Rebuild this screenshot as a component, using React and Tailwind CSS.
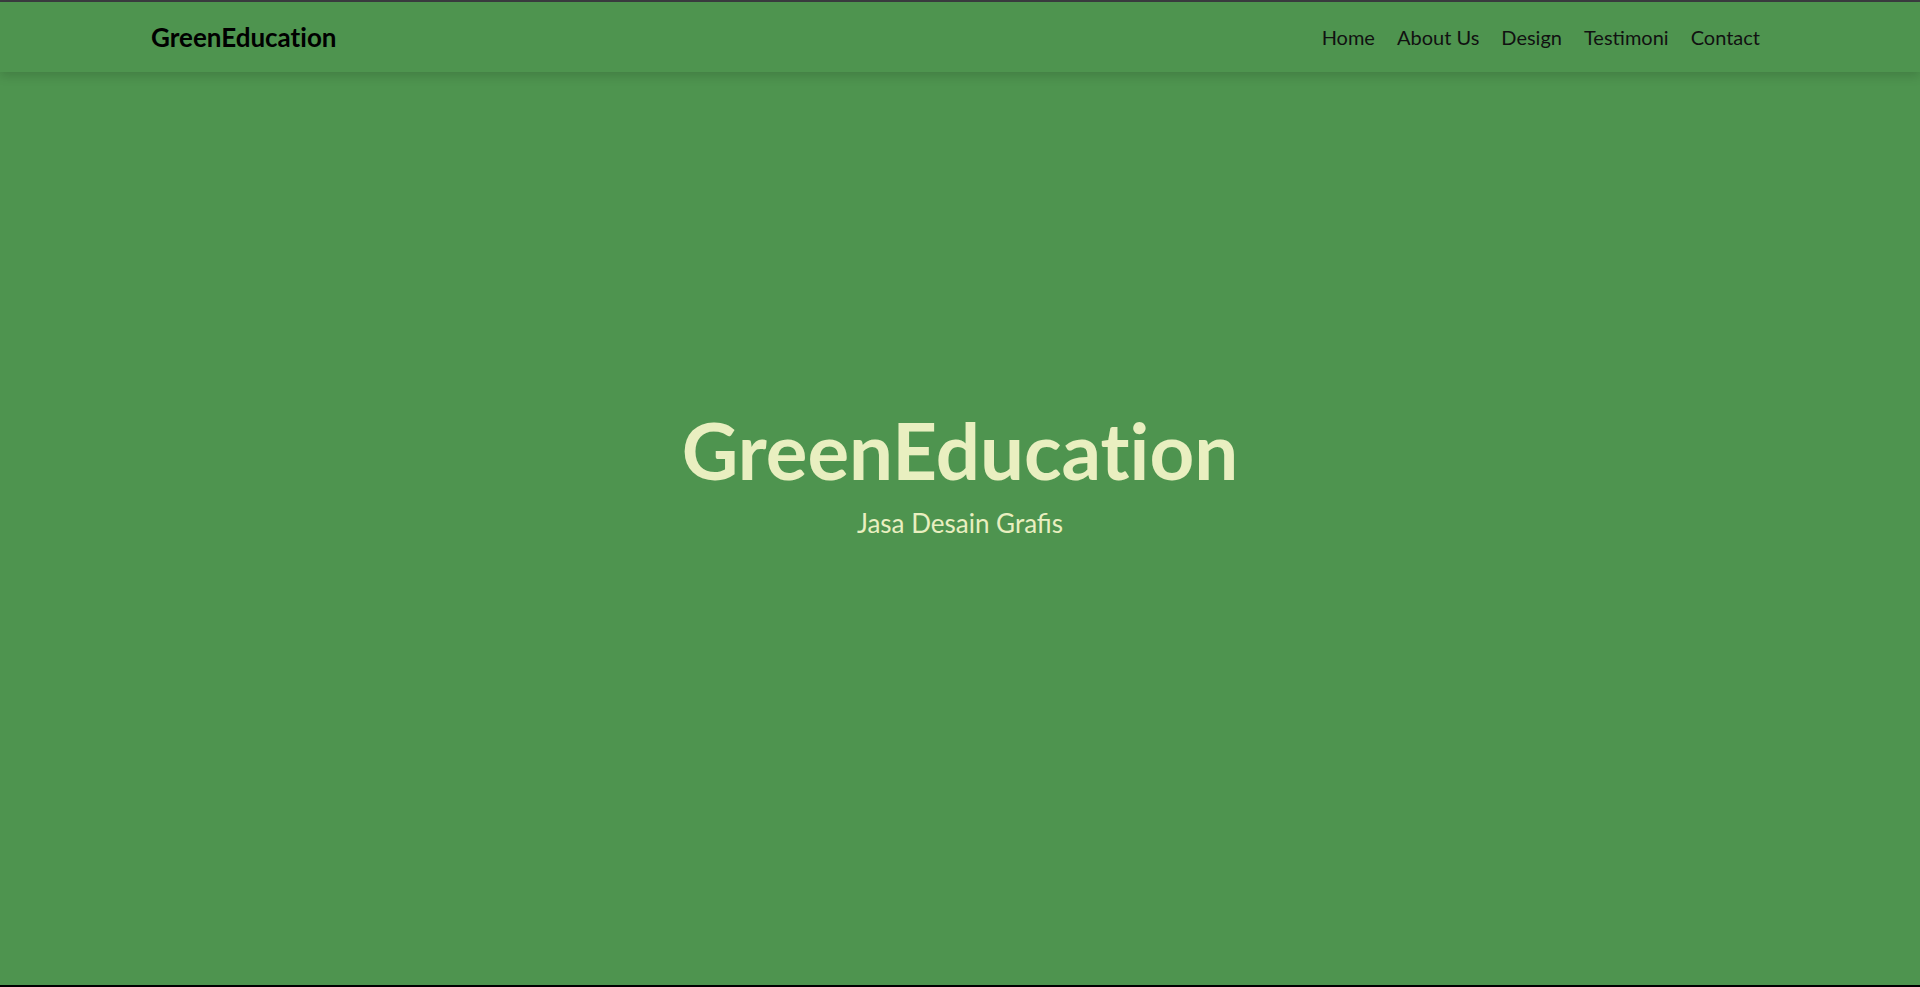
import React from 'react';

const links = ['Home', 'About Us', 'Design', 'Testimoni', 'Contact'];

const App = () => {
  return (
    <div className="h-[987px] flex flex-col bg-[#4E944F] overflow-hidden" style={{ fontFamily: 'Lato, "Open Sans", sans-serif' }}>
      <div className="h-[2px] bg-[#3b3c40]" />
      <nav className="h-[70px] flex items-center justify-between pl-[151px] pr-[160px] bg-[#4E944F] shadow-[0_4px_10px_rgba(0,0,0,0.15)] relative z-10">
        <a href="#" className="text-[26px] font-bold text-black [font-variant-ligatures:none]">GreenEducation</a>
        <ul className="flex items-center gap-[22px]">
          {links.map((l) => (
            <li key={l}>
              <a href="#" className="text-[20px] text-[#111]">{l}</a>
            </li>
          ))}
        </ul>
      </nav>
      <main className="flex-1 flex flex-col items-center pt-[339px]">
        <h1 className="text-[78px] font-bold leading-none text-[#E9EFC0] [font-variant-ligatures:none]">GreenEducation</h1>
        <p className="mt-[15px] text-[26px] text-[#E9EFC0]">Jasa Desain Grafis</p>
      </main>
      <div className="h-[2px] bg-black" />
    </div>
  );
};

export default App;
